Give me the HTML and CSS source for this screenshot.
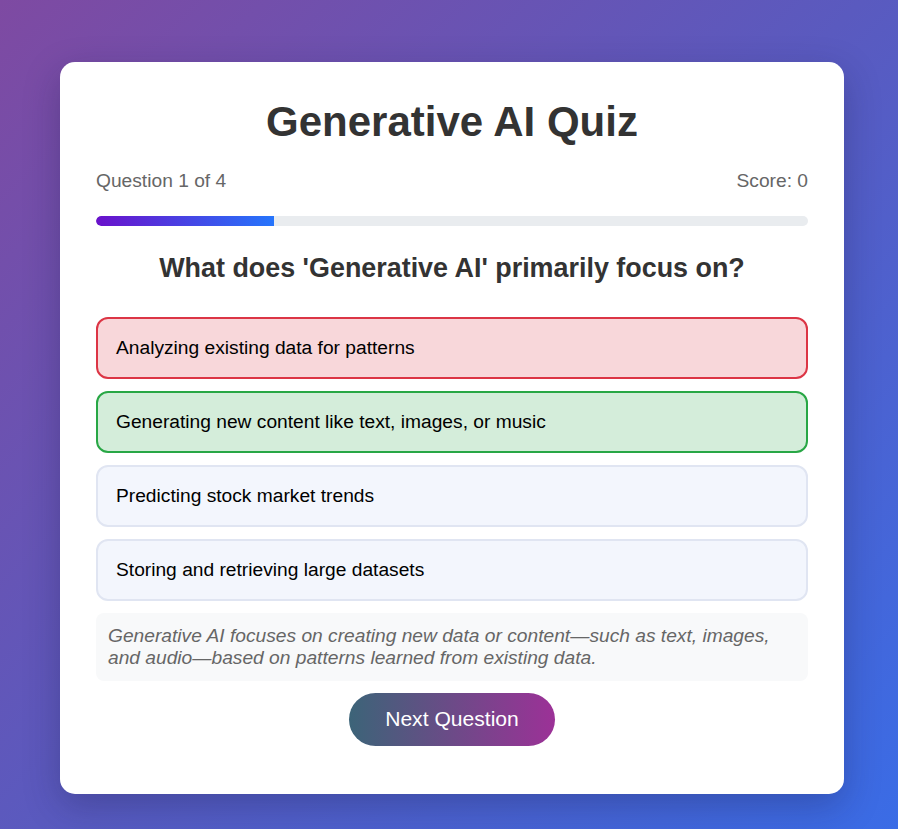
FILE: index.html
```html
<!DOCTYPE html>
<html lang="en">
<head>
<meta charset="UTF-8">
<title>Generative AI Quiz</title>
<link rel="stylesheet" href="styles.css">
</head>
<body>
  <main class="card">
    <h1 class="title">Generative AI Quiz</h1>
    <div class="info">
      <span>Question 1 of 4</span>
      <span>Score: 0</span>
    </div>
    <div class="progress"><div class="progress-fill" style="width:25%"></div></div>
    <h2 class="question">What does 'Generative AI' primarily focus on?</h2>
    <div class="options">
      <div class="option wrong">Analyzing existing data for patterns</div>
      <div class="option correct">Generating new content like text, images, or music</div>
      <div class="option">Predicting stock market trends</div>
      <div class="option">Storing and retrieving large datasets</div>
    </div>
    <p class="explanation">Generative AI focuses on creating new data or content—such as text, images, and audio—based on patterns learned from existing data.</p>
    <div class="actions">
      <button class="next-btn">Next Question</button>
    </div>
  </main>
</body>
</html>
```
FILE: styles.css
```css
html, body {
  margin: 0;
  min-height: 100%;
}
body {
  min-height: 829px;
  box-sizing: border-box;
  padding: 62px 0 0 60px;
  background: linear-gradient(135deg, #7e4aa2 0%, #5a5abf 50%, #3a6ce6 100%);
  font-family: "Liberation Sans", Arial, sans-serif;
  font-size: 19.2px;
}
.card {
  width: 784px;
  box-sizing: border-box;
  background: #ffffff;
  border-radius: 15px;
  padding: 36px 36px 48px;
  box-shadow: 0 12px 36px rgba(20, 20, 60, 0.28);
}
.title {
  margin: 0 0 24px;
  text-align: center;
  font-size: 42px;
  font-weight: bold;
  color: #333333;
}
.info {
  display: flex;
  justify-content: space-between;
  color: #666666;
  margin-bottom: 24px;
}
.progress {
  height: 10px;
  background: #e9ecef;
  border-radius: 5px;
  overflow: hidden;
}
.progress-fill {
  height: 100%;
  background: linear-gradient(90deg, #6a11cb, #2575fc);
  border-radius: 5px 0 0 5px;
}
.question {
  margin: 27px 0 33px;
  text-align: center;
  font-size: 26.9px;
  font-weight: bold;
  color: #333333;
}
.options {
  display: flex;
  flex-direction: column;
  gap: 12px;
}
.option {
  padding: 18px 18px;
  border: 2px solid #e0e5f2;
  background: #f3f6fd;
  border-radius: 12px;
  color: #000000;
}
.option.wrong {
  background: #f8d7da;
  border-color: #dc3545;
}
.option.correct {
  background: #d4edda;
  border-color: #28a745;
}
.explanation {
  margin: 12px 0 0;
  padding: 12px;
  background: #f8f9fa;
  border-radius: 8px;
  color: #666666;
  font-style: italic;
}
.actions {
  display: flex;
  justify-content: center;
  margin-top: 12px;
}
.next-btn {
  border: none;
  border-radius: 30px;
  padding: 14.4px 36px;
  font-family: "Liberation Sans", Arial, sans-serif;
  font-size: 21.1px;
  color: #ffffff;
  background: linear-gradient(90deg, #3c6478, #9c3197);
  cursor: pointer;
}
```
